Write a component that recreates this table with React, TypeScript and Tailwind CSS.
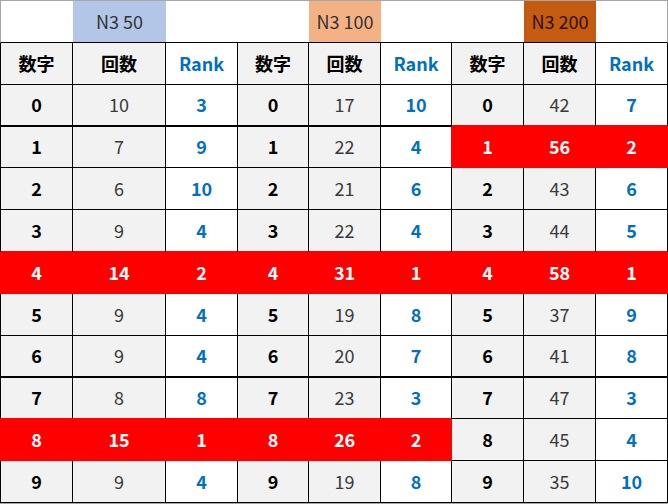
import React from "react";

const W = ["w-[73px]", "w-[93px]", "w-[72px]", "w-[71px]", "w-[72px]", "w-[71px]", "w-[72px]", "w-[72px]", "w-[72px]"];
const H = ["h-[42px]", "h-[41px]", "h-[42px]", "h-[42px]", "h-[42px]", "h-[42px]", "h-[42px]", "h-[41px]", "h-[42px]", "h-[42px]"];

const groups: [number, number][][] = [
  [[10, 3], [7, 9], [6, 10], [9, 4], [14, 2], [9, 4], [9, 4], [8, 8], [15, 1], [9, 4]],
  [[17, 10], [22, 4], [21, 6], [22, 4], [31, 1], [19, 8], [20, 7], [23, 3], [26, 2], [19, 8]],
  [[42, 7], [56, 2], [43, 6], [44, 5], [58, 1], [37, 9], [41, 8], [47, 3], [45, 4], [35, 10]],
];

const isRed = (r: number, c: number) => {
  if (r < 0 || r > 9 || c < 0 || c > 8) return false;
  const g = Math.floor(c / 3);
  return groups[g][r][1] <= 2;
};

const topCells: { label?: string; bg?: string; text?: string }[] = [
  {},
  { label: "N3 50", bg: "bg-[#b4c6e7]", text: "text-[#333333]" },
  {},
  {},
  { label: "N3 100", bg: "bg-[#f4b183]", text: "text-[#333333]" },
  {},
  {},
  { label: "N3 200", bg: "bg-[#c55a11]", text: "text-[#2a1406]" },
  {},
];

function Cell({ r, c }: { r: number; c: number }) {
  const red = isRed(r, c);
  const rightRed = red || isRed(r, c + 1);
  const bottomRed = red || isRed(r + 1, c);
  const kind = c % 3;
  let text: string | number;
  if (r === -1) {
    text = kind === 0 ? "数字" : kind === 1 ? "回数" : "Rank";
  } else {
    const g = Math.floor(c / 3);
    text = kind === 0 ? r : kind === 1 ? groups[g][r][0] : groups[g][r][1];
  }
  const thick = r === 0 || r === 6;
  const bg = red ? "bg-[#ff0000]" : kind === 2 ? "bg-white" : "bg-[#f2f2f2]";
  const color = red
    ? "text-white font-bold"
    : kind === 0
    ? "text-black font-bold"
    : kind === 1
    ? r === -1
      ? "text-black font-bold"
      : "text-[#3a3a3a] font-normal"
    : "text-[#0070c0] font-bold";
  return (
    <div
      className={[
        W[c],
        "flex items-center justify-center border-r text-[18px] pb-[2px]",
        thick ? "border-b-2" : "border-b",
        rightRed ? "border-r-[#ff0000]" : "border-r-black",
        bottomRed ? "border-b-[#ff0000]" : "border-b-black",
        c === 0 ? (red ? "border-l border-l-[#ff0000]" : "border-l border-l-black") : "",
        bg,
        color,
      ].join(" ")}
    >
      {text}
    </div>
  );
}

export default function App() {
  return (
    <div className="w-[668px] h-[504px] bg-white border-t border-b border-[#a6a6a6] font-['Noto_Sans_CJK_JP','Noto_Sans',sans-serif] leading-none">
      <div className="flex h-[42px]">
        {topCells.map((t, i) => (
          <div
            key={i}
            className={[
              W[i],
              "flex items-center justify-center border-b border-b-black text-[18px] font-normal pb-[2px]",
              i === 0 ? "border-l border-l-[#a6a6a6]" : "",
              i === 8 ? "border-r border-r-[#a6a6a6]" : "",
              t.bg ?? "bg-white",
              t.text ?? "",
            ].join(" ")}
          >
            {t.label ?? ""}
          </div>
        ))}
      </div>
      <div className="flex h-[42px]">
        {Array.from({ length: 9 }).map((_, c) => (
          <Cell key={c} r={-1} c={c} />
        ))}
      </div>
      {H.map((h, r) => (
        <div key={r} className={"flex " + h}>
          {Array.from({ length: 9 }).map((_, c) => (
            <Cell key={c} r={r} c={c} />
          ))}
        </div>
      ))}
    </div>
  );
}
